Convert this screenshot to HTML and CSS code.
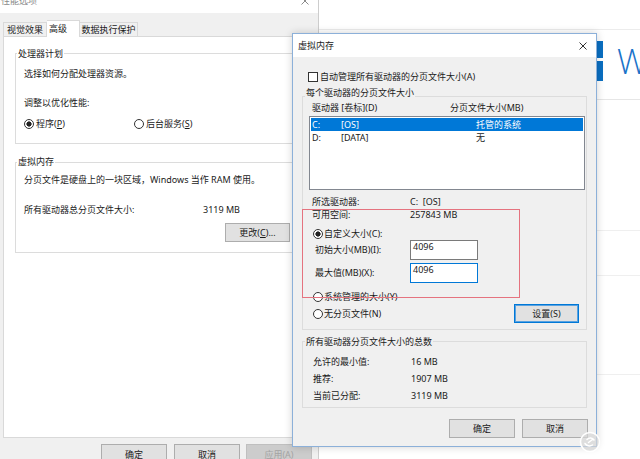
FILE: index.html
```html
<!DOCTYPE html>
<html lang="zh-CN">
<head>
<meta charset="utf-8">
<title>虚拟内存</title>
<link rel="stylesheet" href="styles.css">
</head>
<body>
<div class="bgwin">
  <div class="bg-top"></div>
  <div class="bg-logo-row">
    <svg class="winlogo" width="14" height="40" viewBox="0 0 14 40"><rect x="0" y="0" width="14" height="17" fill="#0a6fc2"/><rect x="0" y="20" width="14" height="20" fill="#0a6fc2"/></svg>
    <span class="bg-w">W</span>
  </div>
  <div class="bg-line l1"></div>
  <div class="bg-line l2"></div>
  <div class="bg-line l3"></div>
  <div class="bg-line l4"></div>
</div>

<div class="perf">
  <div class="perf-title">
    <span class="perf-name">性能选项</span>
    <svg class="xicon" width="8" height="8" viewBox="0 0 8 8"><path d="M0.5 0.5L7.5 7.5M7.5 0.5L0.5 7.5" stroke="#8a8a8a" stroke-width="1"/></svg>
  </div>
  <div class="tabs">
    <div class="tab t1">视觉效果</div>
    <div class="tab t2 sel">高级</div>
    <div class="tab t3">数据执行保护</div>
  </div>
  <div class="panel">
    <div class="grp pg1">
      <div class="legend">处理器计划</div>
      <div class="pbody">
        <div class="txt m5">选择如何分配处理器资源。</div>
        <div class="txt m11">调整以优化性能:</div>
        <div class="txt m3 radios">
          <div class="ritem w110"><span class="rb on"></span><span>程序(<u>P</u>)</span></div>
          <div class="ritem"><span class="rb"></span><span>后台服务(<u>S</u>)</span></div>
        </div>
      </div>
    </div>
    <div class="grp pg2">
      <div class="legend">虚拟内存</div>
      <div class="pbody">
        <div class="txt m3">分页文件是硬盘上的一块区域，Windows 当作 RAM 使用。</div>
        <div class="txt m12 kvrow"><span class="klabel">所有驱动器总分页文件大小:</span><span>3119 MB</span></div>
        <div class="btnrow"><div class="btn change">更改(<u>C</u>)...</div></div>
      </div>
    </div>
  </div>
  <div class="perf-btns">
    <div class="btn pb">确定</div>
    <div class="btn pb mid">取消</div>
    <div class="btn pb dis">应用(A)</div>
  </div>
</div>

<div class="vm">
  <div class="vm-title">
    <span>虚拟内存</span>
    <svg class="xicon" width="8" height="8" viewBox="0 0 8 8"><path d="M0.5 0.5L7.5 7.5M7.5 0.5L0.5 7.5" stroke="#333" stroke-width="1"/></svg>
  </div>
  <div class="vm-body">
    <div class="cbrow"><span class="cb"></span><span>自动管理所有驱动器的分页文件大小(A)</span></div>
    <div class="grp dg1">
      <div class="legend">每个驱动器的分页文件大小</div>
      <div class="hdr"><span class="hc1">驱动器 [卷标](D)</span><span>分页文件大小(MB)</span></div>
      <div class="list">
        <div class="lr sel"><span class="c1">C:</span><span class="c2">[OS]</span><span>托管的系统</span></div>
        <div class="lr"><span class="c1">D:</span><span class="c2">[DATA]</span><span>无</span></div>
      </div>
      <div class="kv first"><span class="kl">所选驱动器:</span><span>C:&nbsp; [OS]</span></div>
      <div class="kv"><span class="kl">可用空间:</span><span>257843 MB</span></div>
      <div class="rrow custom"><span class="rb on"></span><span>自定义大小(C):</span></div>
      <div class="inrow"><span class="il">初始大小(MB)(I):</span><div class="inp">4096</div></div>
      <div class="inrow second"><span class="il">最大值(MB)(X):</span><div class="inp focus">4096</div></div>
      <div class="rrow sys"><span class="rb"></span><span>系统管理的大小(Y)</span></div>
      <div class="rrow none">
        <div class="ritem"><span class="rb"></span><span>无分页文件(N)</span></div>
        <div class="btn set">设置(S)</div>
      </div>
    </div>
    <div class="grp dg2">
      <div class="legend">所有驱动器分页文件大小的总数</div>
      <div class="tot first"><span class="kl">允许的最小值:</span><span>16 MB</span></div>
      <div class="tot"><span class="kl">推荐:</span><span>1907 MB</span></div>
      <div class="tot"><span class="kl">当前已分配:</span><span>3119 MB</span></div>
    </div>
    <div class="vm-btns">
      <div class="btn vb">确定</div>
      <div class="btn vb">取消</div>
    </div>
  </div>
</div>

<div class="redbox"></div>

<svg class="wmark" width="22" height="22" viewBox="0 0 22 22">
  <circle cx="11" cy="11" r="9.5" fill="#d6d6d6" fill-opacity="0.7" stroke="#fff" stroke-width="1.6"/>
  <path d="M6 12.5c1.5 2.5 5 3.2 7.5 1.5M8 8.5c2-2 5.5-2 7 0.5M9.5 11.5l4-3" stroke="#fff" stroke-width="1.5" fill="none" stroke-linecap="round"/>
</svg>
</body>
</html>
```

FILE: styles.css
```css
* { box-sizing: border-box; }
html, body { margin: 0; padding: 0; }
body {
  width: 640px; height: 459px; overflow: hidden; position: relative;
  background: #fff;
  font-family: "Noto Sans", "Noto Sans CJK SC", sans-serif;
  font-size: 9px; line-height: 12px; color: #1a1a1a;
}
u { text-decoration: underline; text-underline-offset: 1px; }

/* background window on the right */
.bgwin { position: absolute; left: 319px; top: 0; right: 0; bottom: 0; background: #fff; overflow: hidden; }
.bg-top { height: 30px; border-bottom: 1px solid #ececec; }
.bg-logo-row { display: flex; align-items: flex-start; gap: 14px; height: 40px; margin-top: 11px; padding-left: 270px; width: 420px; }
.winlogo { display: block; flex: none; }
.bg-w { flex: none; font-family: "Open Sans", "Noto Sans", sans-serif; font-weight: 300; font-size: 34px; line-height: 40px; color: #1a73c9; }
.bg-line { height: 1px; background: #e6e6e6; }
.l1 { margin-top: 18px; }
.l2 { margin-top: 130px; background: #efefef; }
.l3 { margin-top: 44px; background: #efefef; }
.l4 { margin-top: 98px; background: #efefef; }

/* performance options window */
.perf { position: absolute; left: 0; top: -12px; width: 319px; height: 471px; background: #f0f0f0; border-right: 1px solid #cdcdcd; }
.perf-title { height: 25px; background: #fff; display: flex; align-items: center; justify-content: space-between; padding: 0 9px 0 1px; color: #8a8a8a; }
.xicon { display: block; }
.tabs { display: flex; align-items: flex-end; height: 16px; margin-top: 7px; padding-left: 3px; }
.tab { height: 14px; line-height: 13px; border: 1px solid #d9d9d9; border-bottom: none; background: #f0f0f0; text-align: center; }
.t1 { width: 44px; }
.t2 { width: 33px; text-align: left; padding-left: 2px; }
.t3 { width: 58px; border-left: none; }
.tab.sel { height: 17px; line-height: 15px; background: #fff; margin-bottom: -1px; position: relative; z-index: 1; border-left: none; }
.panel { margin-left: 3px; width: 311px; height: 402px; background: #fff; border: 1px solid #d9d9d9; padding-left: 11px; }

.grp { border: 1px solid #dcdcdc; }
.legend { display: block; width: fit-content; background: #fff; padding: 0 1px; margin-left: 1px; line-height: 12px; }
.pg1 { width: 284px; margin-top: 16px; }
.pg1 .legend { margin-top: -6px; }
.pg2 { width: 284px; margin-top: 18px; }
.pg2 .legend { margin-top: -7px; }
.pbody { padding: 0 8px 10px 8px; }
.txt { height: 18px; line-height: 18px; }
.m3 { margin-top: 3px; }
.m5 { margin-top: 5px; }
.m11 { margin-top: 11px; }
.m12 { margin-top: 12px; }
.radios { display: flex; align-items: center; }
.ritem { display: flex; align-items: center; }
.w110 { width: 110px; }
.rb { display: inline-block; width: 10px; height: 10px; border: 1px solid #333; border-radius: 50%; background: #fff; margin-right: 2px; flex: none; }
.rb.on { background: radial-gradient(circle, #222 0 2.3px, #fff 2.9px); }
.kvrow { display: flex; }
.klabel { width: 179px; }
.btnrow { display: flex; justify-content: flex-end; margin-top: 4px; }
.btn { display: flex; align-items: center; justify-content: center; border: 1px solid #adadad; background: #e1e1e1; }
.change { width: 65px; height: 19px; }
.perf-btns { display: flex; justify-content: flex-end; margin-top: 6px; padding-right: 6px; }
.pb { width: 66px; height: 21px; margin-left: 6px; }
.pb.mid { margin-left: 7px; }
.pb.dis { color: #a3a3a3; background: #cccccc; border-color: #bfbfbf; }

/* virtual memory dialog */
.vm { position: absolute; left: 292px; top: 33px; width: 305px; height: 414px; background: #f0f0f0; border: 1px solid #8cb0d9; box-shadow: 0 0 8px rgba(0,0,0,0.18); }
.vm-title { height: 23px; background: #fff; display: flex; align-items: center; justify-content: space-between; padding: 0 9px 0 5px; }
.vm-body { padding: 0 8px 0 9px; }
.cbrow { display: flex; align-items: center; height: 12px; margin-top: 14px; padding-left: 6px; }
.cb { width: 10px; height: 10px; border: 1px solid #333; background: #fff; margin-right: 2px; }
.vm .legend { background: #f0f0f0; margin-left: 2px; }
.dg1 { width: 285px; margin-top: 13px; padding-bottom: 6px; }
.dg1 .legend { margin-top: -10px; }
.hdr { display: flex; height: 12px; margin-top: 3px; padding-left: 9px; }
.hc1 { width: 138px; }
.list { margin: 2px 0 0 6px; width: 276px; height: 74px; border: 1px solid #828790; background: #fff; padding: 1px; }
.lr { display: flex; height: 13px; line-height: 13px; padding-left: 1px; }
.lr.sel { background: #0078d7; color: #fff; }
.c1 { width: 29px; }
.c2 { width: 135px; }
.kv { display: flex; height: 13px; line-height: 13px; padding-left: 9px; }
.kv.first { margin-top: 5px; }
.kl { width: 98px; }
.rrow { display: flex; align-items: center; padding-left: 10px; }
.rrow .rb { margin-right: 1px; }
.custom { height: 13px; margin-top: 6px; }
.inrow { display: flex; align-items: center; height: 20px; padding-left: 12px; }
.inrow.second { margin-top: 3px; }
.il { width: 95px; }
.inp { width: 68px; height: 20px; border: 1px solid #7a7a7a; background: #fff; padding: 0 2px; line-height: 12px; }
.inp.focus { border-color: #0078d7; }
.sys { height: 13px; margin-top: 7px; }
.none { height: 19px; margin-top: 1px; justify-content: space-between; padding-right: 7px; }
.set { width: 65px; height: 19px; border: 1px solid #0078d7; box-shadow: inset 0 0 0 1px #5aa2e0; background: #e1e1e1; }
.dg2 { width: 285px; margin-top: 11px; padding-bottom: 3px; }
.dg2 .legend { margin-top: -6px; }
.tot { display: flex; height: 17px; line-height: 17px; padding-left: 10px; }
.tot.first { margin-top: 5px; }
.vm-btns { display: flex; justify-content: flex-end; gap: 7px; margin-top: 11px; }
.vb { width: 66px; height: 19px; }

/* annotation overlays */
.redbox { position: absolute; left: 302px; top: 209px; width: 218px; height: 89px; border: 1px solid #e5737f; }
.wmark { position: absolute; left: 579px; top: 431px; }
```
